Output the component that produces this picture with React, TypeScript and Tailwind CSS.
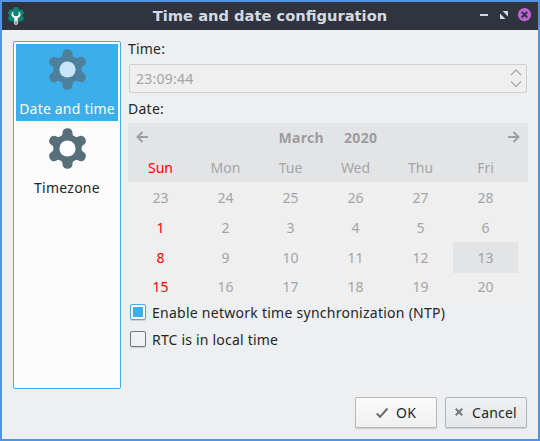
import type { ReactNode } from 'react';

const weekdays = ['Sun', 'Mon', 'Tue', 'Wed', 'Thu', 'Fri'];
const weeks = [
  [23, 24, 25, 26, 27, 28],
  [1, 2, 3, 4, 5, 6],
  [8, 9, 10, 11, 12, 13],
  [15, 16, 17, 18, 19, 20],
];

function Gear({ color, center, className }: { color: string; center: string; className: string }) {
  return (
    <svg className={className} viewBox="-20.500 -20.500 41 41">
      <g fill={color}>
        <circle r="14" />
        {[0, 60, 120, 180, 240, 300].map((a) => (
          <path
            key={a}
            transform={`rotate(${a})`}
            d="M-8 -11C-5.500 -12.500 -5 -13.500 -5 -15.500C-5 -18.500 -3 -20.300 0 -20.300S5 -18.500 5 -15.500C5 -13.500 5.500 -12.500 8 -11z"
          />
        ))}
      </g>
      <circle r="8.100" fill={center} />
    </svg>
  );
}

function AppIcon() {
  return (
    <svg className="h-[18px] w-[18px]" viewBox="0 0 18 18">
      <g fill="#07836f" transform="translate(9 8.5)">
        <circle r="6.8" />
        {[0, 60, 120, 180, 240, 300].map((a) => (
          <rect key={a} x="-2.6" y="-8.5" width="5.2" height="5" rx="1.5" transform={`rotate(${a})`} />
        ))}
      </g>
      <path
        d="M6.300 4.600C4.200 5.700 4 8.200 5.300 9.700c.6.7 1.400 1 1.900 1.500v5c0 2 3.600 2 3.600 0v-5c.5-.5 1.300-.8 1.900-1.500C14 8.200 13.800 5.700 11.700 4.600v3L10.500 9h-3L6.300 7.600z"
        fill="#f5f7f7"
      />
      <path d="M7.300 13.500h3.400v2.700c0 1.900-3.400 1.900-3.400 0z" fill="#b4babb" />
      <circle cx="9" cy="15.700" r=".7" fill="#5d6467" />
    </svg>
  );
}

function TitleBar() {
  return (
    <header className="flex h-7 shrink-0 items-center bg-[#2f343f] pr-[4px] pl-[5px]">
      <AppIcon />
      <h1 className="flex-1 pl-[35px] text-center font-['DejaVu_Sans',sans-serif] text-[14.67px] leading-[26px] font-bold whitespace-nowrap text-[#d3dae3]">
        Time and date configuration
      </h1>
      <svg className="h-7 w-[54px]" viewBox="0 0 54 28">
        <rect x="-1" y="12" width="8" height="2" fill="#d3dae3" className="translate-x-px" />
        <path d="M22.500 9h5.500v5.500zM20 11.500l5.500 5.500H20z" fill="#d3dae3" />
        <circle cx="44.500" cy="12.700" r="6.600" fill="#c061d6" />
        <path d="M41.700 9.900l5.600 5.600m0-5.600l-5.600 5.600" stroke="#2f343f" strokeWidth="1.900" />
      </svg>
    </header>
  );
}

function Checkbox({ checked, children }: { checked?: boolean; children: ReactNode }) {
  return (
    <label className="flex h-[27px] items-center gap-[6px] pl-[2px]">
      <span
        className={`mb-px flex size-4 items-center justify-center rounded-[2px] border shadow-[0_1px_1px_rgba(0,0,0,0.14)] ${
          checked ? 'border-[#3daee9] bg-[#fcfcfc]' : 'border-[#75787b] bg-[#f0f1f2]'
        }`}
      >
        {checked && <span className="size-[10px] bg-[#3daee9]" />}
      </span>
      {children}
    </label>
  );
}

export default function App() {
  return (
    <div className="flex h-[441px] w-[540px] flex-col border-2 border-[#5294e2] bg-[#eeeff1] font-['Noto_Sans','Open_Sans',sans-serif] text-[14px] leading-5 whitespace-nowrap text-[#232627]">
      <TitleBar />
      <div className="flex h-[359px] pt-[11px] pl-[11px]">
        <aside className="h-[348px] w-[108px] rounded-[2px] border border-[#3daee9] bg-[#fcfcfc] p-[2px]">
          <div className="flex h-[77px] flex-col items-center bg-[#3daee9] pt-[5px] text-[#fcfcfc]">
            <Gear className="size-[41px]" color="#4d809c" center="#c6e5f8" />
            <span className="mt-[9px] tracking-[0.2px]">Date and time</span>
          </div>
          <div className="flex h-[79px] flex-col items-center pt-[7px]">
            <Gear className="size-[41px]" color="#566f7b" center="#fdfdfd" />
            <span className="mt-[9px] tracking-[0.25px]">Timezone</span>
          </div>
        </aside>
        <main className="ml-[7px] w-[400px]">
          <div className="h-[23px] leading-[16px] tracking-[0.2px]">Time:</div>
          <div className="mx-[1px] flex h-[29px] items-center justify-between rounded-[2px] border border-[#cfd0d2] bg-[#efefef] pr-[4px] pl-[6px] text-[#a3a3a4]">
            <span className="tracking-[0.25px]">23:09:44</span>
            <svg className="h-[27px] w-3" viewBox="0 0 12 27" fill="none" stroke="#a3a4a5" strokeWidth="1.100">
              <path d="M1 10l5-5 5 5M1 16.500l5 5 5-5" />
            </svg>
          </div>
          <div className="h-[30px] pt-[7px] leading-[18px] tracking-[0.25px]">Date:</div>
          <section className="h-[179px] bg-[#efefef] text-[#a4a5a6]">
            <div className="h-[59px] bg-[#e3e4e6]">
              <div className="flex h-[30px] items-center justify-between px-2 font-bold text-[#9c9d9f]">
                <svg className="mb-[2px] h-3 w-3" viewBox="0 0 12 12" fill="none" stroke="currentColor" strokeWidth="2">
                  <path d="M12 6H1.500M6.500 1l-5 5 5 5" />
                </svg>
                <div className="flex gap-[20px]">
                  <span className="tracking-[0.3px]">March</span>
                  <span className="tracking-[0.4px]">2020</span>
                </div>
                <svg className="mb-[2px] h-3 w-3" viewBox="0 0 12 12" fill="none" stroke="currentColor" strokeWidth="2">
                  <path d="M0 6h10.500M5.500 1l5 5-5 5" />
                </svg>
              </div>
              <div className="grid h-[29px] w-[390px] grid-cols-6 items-center text-center">
                {weekdays.map((d, i) => (
                  <span key={d} className={i === 0 ? 'text-[#ff0000]' : ''}>
                    {d}
                  </span>
                ))}
              </div>
            </div>
            {weeks.map((week, r) => (
              <div key={r} className={`grid w-[390px] grid-cols-6 text-center ${r === 3 ? 'h-[29px] leading-[29px]' : 'h-[30px] leading-[31px]'}`}>
                {week.map((day, c) => (
                  <span
                    key={day}
                    className={`${c === 0 && r > 0 ? 'text-[#ff0000]' : ''} ${day === 13 ? 'bg-[#e3e4e6] text-[#a0a1a3]' : ''}`}
                  >
                    {day}
                  </span>
                ))}
              </div>
            ))}
          </section>
          <div className="-mt-[3px]">
            <Checkbox checked>
              <span className="tracking-[0.26px]">Enable network time synchronization (NTP)</span>
            </Checkbox>
            <Checkbox>
              <span className="tracking-[0.2px]">RTC is in local time</span>
            </Checkbox>
          </div>
        </main>
      </div>
      <footer className="mt-[8px] flex justify-end gap-2 pr-[11px]">
        <button className="flex h-[31px] w-[82px] items-center justify-center gap-[8px] rounded-[2px] border border-[#b5b6b8] bg-linear-to-b from-[#fbfbfb] to-[#f0f0f1] shadow-[0_1px_1px_rgba(0,0,0,0.15)]">
          <svg className="h-3 w-3" viewBox="0 0 12 12" fill="none" stroke="#68696b" strokeWidth="2">
            <path d="M.7 6.500l3.300 3.300L11.500 1.500" />
          </svg>
          <span className="tracking-[0.2px]">OK</span>
        </button>
        <button className="flex h-[31px] w-[82px] items-center justify-center gap-[9px] rounded-[2px] border border-[#b5b6b8] bg-linear-to-b from-[#f0f1f2] to-[#e6e7e9] shadow-[0_1px_1px_rgba(0,0,0,0.15)]">
          <svg className="mb-px h-2 w-2" viewBox="0 0 8 8" fill="none" stroke="#77787a" strokeWidth="2">
            <path d="M.7.7l6.600 6.600m0-6.600L.7 7.300" />
          </svg>
          <span className="tracking-[0.2px]">Cancel</span>
        </button>
      </footer>
    </div>
  );
}
